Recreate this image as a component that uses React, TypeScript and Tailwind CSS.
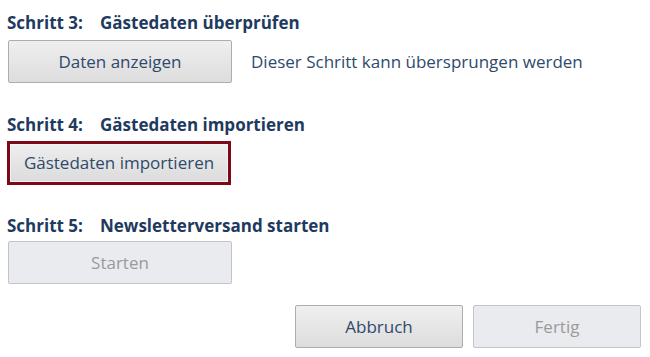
import React from 'react';

const font = { fontFamily: '"Open Sans", "Noto Sans", sans-serif' };

function Heading({ step, title }: { step: string; title: string }) {
  return (
    <div className="flex h-[20px] items-center text-[17px] font-bold leading-none text-[#1e3a5f]">
      <span className="w-[93px]">{step}</span>
      <span>{title}</span>
    </div>
  );
}

function Btn({ children, disabled, focused, className = '' }: { children: React.ReactNode; disabled?: boolean; focused?: boolean; className?: string }) {
  const base = 'flex h-[43px] w-[224px] items-center justify-center rounded-[2px] text-[17px]';
  if (disabled) {
    return (
      <div className={`${base} border border-[#c2c5ca] bg-[#e9ebee] text-[#9a9a9a] ${className}`}>{children}</div>
    );
  }
  if (focused) {
    return (
      <div className={`h-[44px] w-[224px] border-[3px] border-[#7b0a16] ${className}`}>
        <div className="flex h-full w-full items-center justify-center border border-[#f4f4f4] bg-gradient-to-b from-[#ededed] to-[#dcdcdc] text-[17px] text-[#2e4a6b]">
          {children}
        </div>
      </div>
    );
  }
  return (
    <div className={`${base} border border-[#adadad] bg-gradient-to-b from-[#efefef] to-[#dddddd] text-[#2e4a6b] ${className}`}>{children}</div>
  );
}

export default function App() {
  return (
    <div className="h-[357px] w-[650px] bg-white" style={font}>
      <div className="flex flex-col pl-[7px] pt-[12px]">
        <Heading step="Schritt 3:" title="Gästedaten überprüfen" />
        <div className="mt-[8px] flex items-center">
          <Btn className="ml-[1px]">Daten anzeigen</Btn>
          <span className="ml-[19px] text-[17px] text-[#2e4a6b]">Dieser Schritt kann übersprungen werden</span>
        </div>
        <div className="mt-[31px]">
          <Heading step="Schritt 4:" title="Gästedaten importieren" />
        </div>
        <div className="mt-[7px]">
          <Btn focused>Gästedaten importieren</Btn>
        </div>
        <div className="mt-[30px]">
          <Heading step="Schritt 5:" title="Newsletterversand starten" />
        </div>
        <div className="mt-[6px]">
          <Btn disabled className="ml-[1px]">Starten</Btn>
        </div>
      </div>
      <div className="mt-[21px] flex justify-end gap-[10px] pr-[9px]">
        <Btn className="!w-[168px]">Abbruch</Btn>
        <Btn disabled className="!w-[168px]">Fertig</Btn>
      </div>
    </div>
  );
}
